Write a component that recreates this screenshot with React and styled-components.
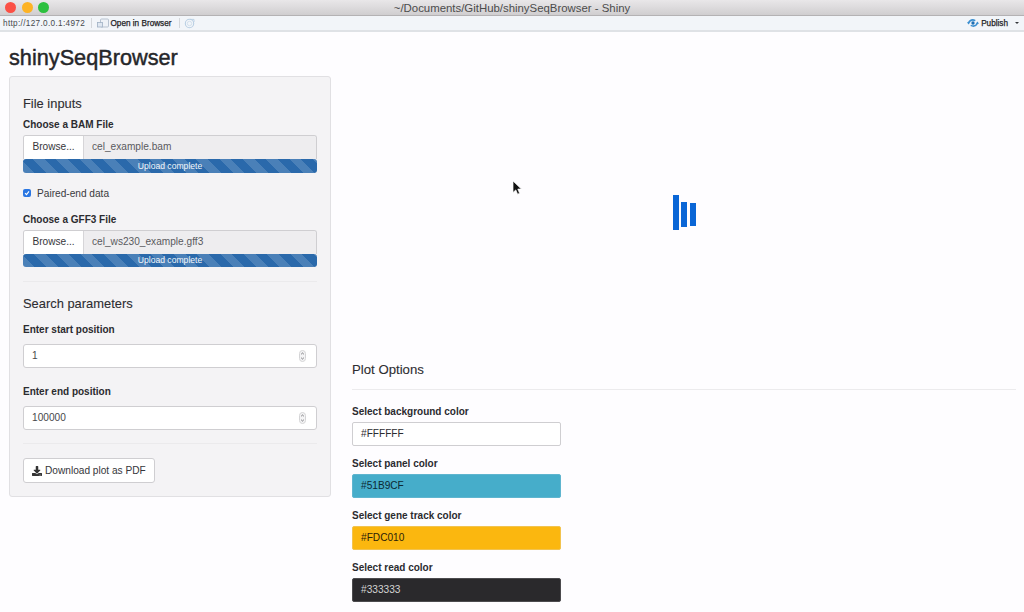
import styled, { createGlobalStyle } from "styled-components";
import { FaDownload } from "react-icons/fa";

const GlobalStyle = createGlobalStyle`
  html, body {
    margin: 0;
    height: 612px;
    overflow: hidden;
    background: #fefdff;
    font-family: "Liberation Sans", Arial, sans-serif;
    font-size: 10.15px;
    color: #2f2f33;
  }
  * { box-sizing: border-box; }
`;

const Page = styled.div`
  position: relative;
  width: 1024px;
  height: 612px;
  overflow: hidden;
`;

const TitleBar = styled.div`
  position: relative;
  height: 16px;
  display: flex;
  align-items: center;
  justify-content: center;
  background: linear-gradient(#e9e7e9, #d0ced0);
  border-bottom: 1px solid #b4b2b4;
  font-size: 11.4px;
  color: #4c4c4c;
`;

const Lights = styled.div`
  position: absolute;
  left: 5px;
  top: 2px;
  display: flex;
  gap: 5.5px;
`;

const Light = styled.span`
  width: 11px;
  height: 11px;
  border-radius: 50%;
  background: ${(p) => p.$color};
`;

const ToolBar = styled.div`
  height: 16px;
  display: flex;
  align-items: center;
  padding: 0 3px;
  background: #f2f5f9;
  border-bottom: 2px solid #dfe2e6;
  font-size: 8.2px;
  color: #45494d;
`;

const Url = styled.span`
  letter-spacing: 0.33px;
  width: 87.5px;
`;

const ToolSep = styled.span`
  width: 1px;
  height: 10px;
  background: #d4d7db;
  margin-right: ${(p) => p.$gap || 5}px;
`;

const OpenLink = styled.span`
  display: flex;
  align-items: center;
  gap: 2px;
  color: #1f2326;
  margin-right: 8px;
  -webkit-text-stroke: 0.25px #1f2326;
`;

const Publish = styled.span`
  margin-left: auto;
  display: flex;
  align-items: center;
  gap: 2px;
  color: #1f2326;
  padding-right: 2px;
  -webkit-text-stroke: 0.25px #1f2326;
`;

const Caret = styled.span`
  margin-left: 5px;
  width: 0;
  height: 0;
  border-left: 2px solid transparent;
  border-right: 2px solid transparent;
  border-top: 2.5px solid #33373b;
`;

const Content = styled.div`
  padding: 0 8px 0 9px;
`;

const Title = styled.h2`
  margin: 0;
  height: 44px;
  padding-top: 13px;
  font-size: 21.7px;
  line-height: 25px;
  font-weight: 400;
  color: #26262a;
  -webkit-text-stroke: 0.45px #26262a;
`;

const Columns = styled.div`
  display: grid;
  grid-template-columns: 322px 1fr;
  column-gap: 21px;
`;

const Panel = styled.div`
  width: 322px;
  height: 421px;
  padding: 19px 13px 0;
  background: #f4f3f5;
  border: 1px solid #e1e0e3;
  border-radius: 3px;
`;

const SectionTitle = styled.div`
  font-size: 12.9px;
  line-height: 16px;
  color: #2d2d31;
  -webkit-text-stroke: 0.1px #2d2d31;
`;

const Label = styled.div`
  font-weight: 700;
  font-size: 10px;
  line-height: 13px;
  margin-top: ${(p) => p.$top || 0}px;
  margin-bottom: ${(p) => p.$bottom || 0}px;
  color: #2b2b2f;
`;

const FileRow = styled.div`
  display: flex;
  height: 24px;
  border: 1px solid #cfced1;
  border-bottom: none;
  border-radius: 3px 3px 0 0;
  overflow: hidden;
`;

const BrowseButton = styled.div`
  width: 60px;
  display: flex;
  align-items: center;
  justify-content: center;
  padding-bottom: 2px;
  background: #fff;
  border-right: 1px solid #d6d5d8;
  color: #36363a;
`;

const FileName = styled.div`
  flex: 1;
  display: flex;
  align-items: center;
  padding: 0 0 2px 8px;
  background: #eeedef;
  color: #5a5a5e;
`;

const Progress = styled.div`
  height: 13.5px;
  display: flex;
  align-items: center;
  justify-content: center;
  border-radius: 3px;
  background-color: #2b6cb0;
  background-image: repeating-linear-gradient(
    45deg,
    #4a80b8 0,
    #4a80b8 8.25px,
    #2a69ab 8.25px,
    #2a69ab 16.5px
  );
  color: #f2f6fa;
  font-size: 8.6px;
`;

const CheckRow = styled.div`
  display: flex;
  align-items: center;
  gap: 6px;
  margin-top: 14px;
  height: 13px;
  color: #3a3a3e;
`;

const CheckBox = styled.span`
  width: 8px;
  height: 8px;
  display: flex;
  align-items: center;
  justify-content: center;
  border-radius: 2px;
  background: #2a76e2;
`;

const Divider = styled.div`
  height: 1px;
  background: #ebeaec;
  margin-top: ${(p) => p.$top}px;
  margin-bottom: ${(p) => p.$bottom}px;
`;

const NumberBox = styled.div`
  height: 24px;
  display: flex;
  align-items: center;
  justify-content: space-between;
  padding: 0 10px 0 8px;
  background: #fff;
  border: 1px solid #cfced1;
  border-radius: 3px;
  color: #47474b;
`;

const DownloadButton = styled.div`
  width: 132px;
  height: 25px;
  display: flex;
  align-items: center;
  gap: 3px;
  padding-left: 8px;
  background: #fff;
  border: 1px solid #cfced1;
  border-radius: 3px;
  color: #36363a;
`;

const PlotArea = styled.div`
  height: 274px;
  display: flex;
  align-items: center;
  justify-content: center;
`;

const Bars = styled.div`
  display: flex;
  align-items: flex-start;
  height: 36px;
  gap: 2.5px;
`;

const Bar = styled.span`
  width: 6px;
  height: ${(p) => p.$h}px;
  margin-top: ${(p) => p.$top}px;
  background: #0a66d6;
`;

const OptionsTitle = styled.div`
  margin-top: 12px;
  font-size: 13.2px;
  line-height: 16px;
  color: #2d2d31;
  -webkit-text-stroke: 0.1px #2d2d31;
`;

const OptionsRule = styled.div`
  height: 1px;
  margin: 11px 0 15px;
  background: #ecebed;
`;

const ColorField = styled.div`
  width: 209px;
  height: 24px;
  display: flex;
  align-items: center;
  padding: 0 0 2px 8px;
  margin-bottom: 11px;
  border-radius: 2px;
  border: 1px solid ${(p) => p.$border};
  background: ${(p) => p.$bg};
  color: ${(p) => p.$fg};
`;

const Cursor = styled.svg`
  position: absolute;
  left: 512px;
  top: 180px;
`;

function SpinArrows() {
  return (
    <svg width="7" height="12" viewBox="0 0 7 12">
      <rect x="0.5" y="0.5" width="6" height="11" rx="3" fill="#f4f4f5" stroke="#d4d4d6" />
      <path d="M2.2 4.2 3.5 3 4.8 4.2M2.2 7.8 3.5 9 4.8 7.8" fill="none" stroke="#55555a" strokeWidth="0.8" />
    </svg>
  );
}

function BrowserIcon() {
  return (
    <svg width="12" height="10" viewBox="0 0 12 10">
      <rect x="3.5" y="1" width="8" height="8" rx="1" fill="#eef2f7" stroke="#a9b6c6" strokeWidth="0.8" />
      <rect x="0.5" y="4.5" width="5" height="4.5" fill="#dfe7f1" stroke="#9fb0c4" strokeWidth="0.8" />
    </svg>
  );
}

function RefreshIcon() {
  return (
    <svg width="11" height="11" viewBox="0 0 11 11">
      <circle cx="5.5" cy="5.5" r="4.2" fill="none" stroke="#b9cfe3" strokeWidth="1.1" />
      <circle cx="5.5" cy="5.5" r="2.2" fill="none" stroke="#cfdeeb" strokeWidth="0.9" />
      <path d="M6 1.4h4v2.6" fill="none" stroke="#b9cfe3" strokeWidth="0.9" />
    </svg>
  );
}

function PublishIcon() {
  return (
    <svg width="12" height="10" viewBox="0 0 13 10">
      <path d="M1.5 5C3 2.2 6 1 9 2.4" fill="none" stroke="#3c8fd0" strokeWidth="1.7" />
      <path d="M11.5 5C10 7.8 7 9 4 7.6" fill="none" stroke="#3c8fd0" strokeWidth="1.7" />
      <circle cx="6.5" cy="5" r="1.8" fill="#1f6fb4" />
      <path d="M0 4.2h3.6L1.6 6.6zM13 5.8H9.4l2-2.4z" fill="#3c8fd0" />
    </svg>
  );
}

const colors = [
  { label: "Select background color", value: "#FFFFFF", bg: "#fff", fg: "#2b2b2f", border: "#cfced1" },
  { label: "Select panel color", value: "#51B9CF", bg: "#46adca", fg: "#0c2a33", border: "#5fb5cf" },
  { label: "Select gene track color", value: "#FDC010", bg: "#fbb70f", fg: "#2c2208", border: "#f2c34f" },
  { label: "Select read color", value: "#333333", bg: "#2a292c", fg: "#d2d2d2", border: "#4c4b4e" },
];

function FileInput({ name }) {
  return (
    <>
      <FileRow>
        <BrowseButton>Browse...</BrowseButton>
        <FileName>{name}</FileName>
      </FileRow>
      <Progress>Upload complete</Progress>
    </>
  );
}

export default function App() {
  return (
    <Page>
      <GlobalStyle />
      <TitleBar>
        <Lights>
          <Light $color="#fb5046" />
          <Light $color="#fdb325" />
          <Light $color="#2cc03f" />
        </Lights>
        ~/Documents/GitHub/shinySeqBrowser - Shiny
      </TitleBar>
      <ToolBar>
        <Url>http://127.0.0.1:4972</Url>
        <ToolSep />
        <OpenLink>
          <BrowserIcon />
          Open in Browser
        </OpenLink>
        <ToolSep $gap={4} />
        <RefreshIcon />
        <Publish>
          <PublishIcon />
          Publish
          <Caret />
        </Publish>
      </ToolBar>
      <Content>
        <Title>shinySeqBrowser</Title>
        <Columns>
          <Panel>
            <SectionTitle>File inputs</SectionTitle>
            <Label $top={6} $bottom={4}>Choose a BAM File</Label>
            <FileInput name="cel_example.bam" />
            <CheckRow>
              <CheckBox>
                <svg width="6" height="6" viewBox="0 0 6 6">
                  <path d="M1 3.2 2.5 4.7 5 1.3" fill="none" stroke="#fff" strokeWidth="1.1" />
                </svg>
              </CheckBox>
              Paired-end data
            </CheckRow>
            <Label $top={13} $bottom={4}>Choose a GFF3 File</Label>
            <FileInput name="cel_ws230_example.gff3" />
            <Divider $top={14} $bottom={13.5} />
            <SectionTitle>Search parameters</SectionTitle>
            <Label $top={11} $bottom={8}>Enter start position</Label>
            <NumberBox>
              1
              <SpinArrows />
            </NumberBox>
            <Label $top={17} $bottom={8}>Enter end position</Label>
            <NumberBox>
              100000
              <SpinArrows />
            </NumberBox>
            <Divider $top={13.5} $bottom={14} />
            <DownloadButton>
              <FaDownload size={10} color="#333" />
              Download plot as PDF
            </DownloadButton>
          </Panel>
          <div>
            <PlotArea>
              <Bars>
                <Bar $h={35} $top={0} />
                <Bar $h={25} $top={6.7} />
                <Bar $h={23} $top={8.3} />
              </Bars>
            </PlotArea>
            <OptionsTitle>Plot Options</OptionsTitle>
            <OptionsRule />
            {colors.map((c) => (
              <div key={c.label}>
                <Label $bottom={4}>{c.label}</Label>
                <ColorField $bg={c.bg} $fg={c.fg} $border={c.border}>
                  {c.value}
                </ColorField>
              </div>
            ))}
          </div>
        </Columns>
      </Content>
      <Cursor width="11" height="16" viewBox="0 0 11 16">
        <path d="M1 1v11.5l2.8-2.6 1.8 4.3 2-.9-1.8-4.2h3.6z" fill="#111" stroke="#fff" strokeWidth="0.7" />
      </Cursor>
    </Page>
  );
}
